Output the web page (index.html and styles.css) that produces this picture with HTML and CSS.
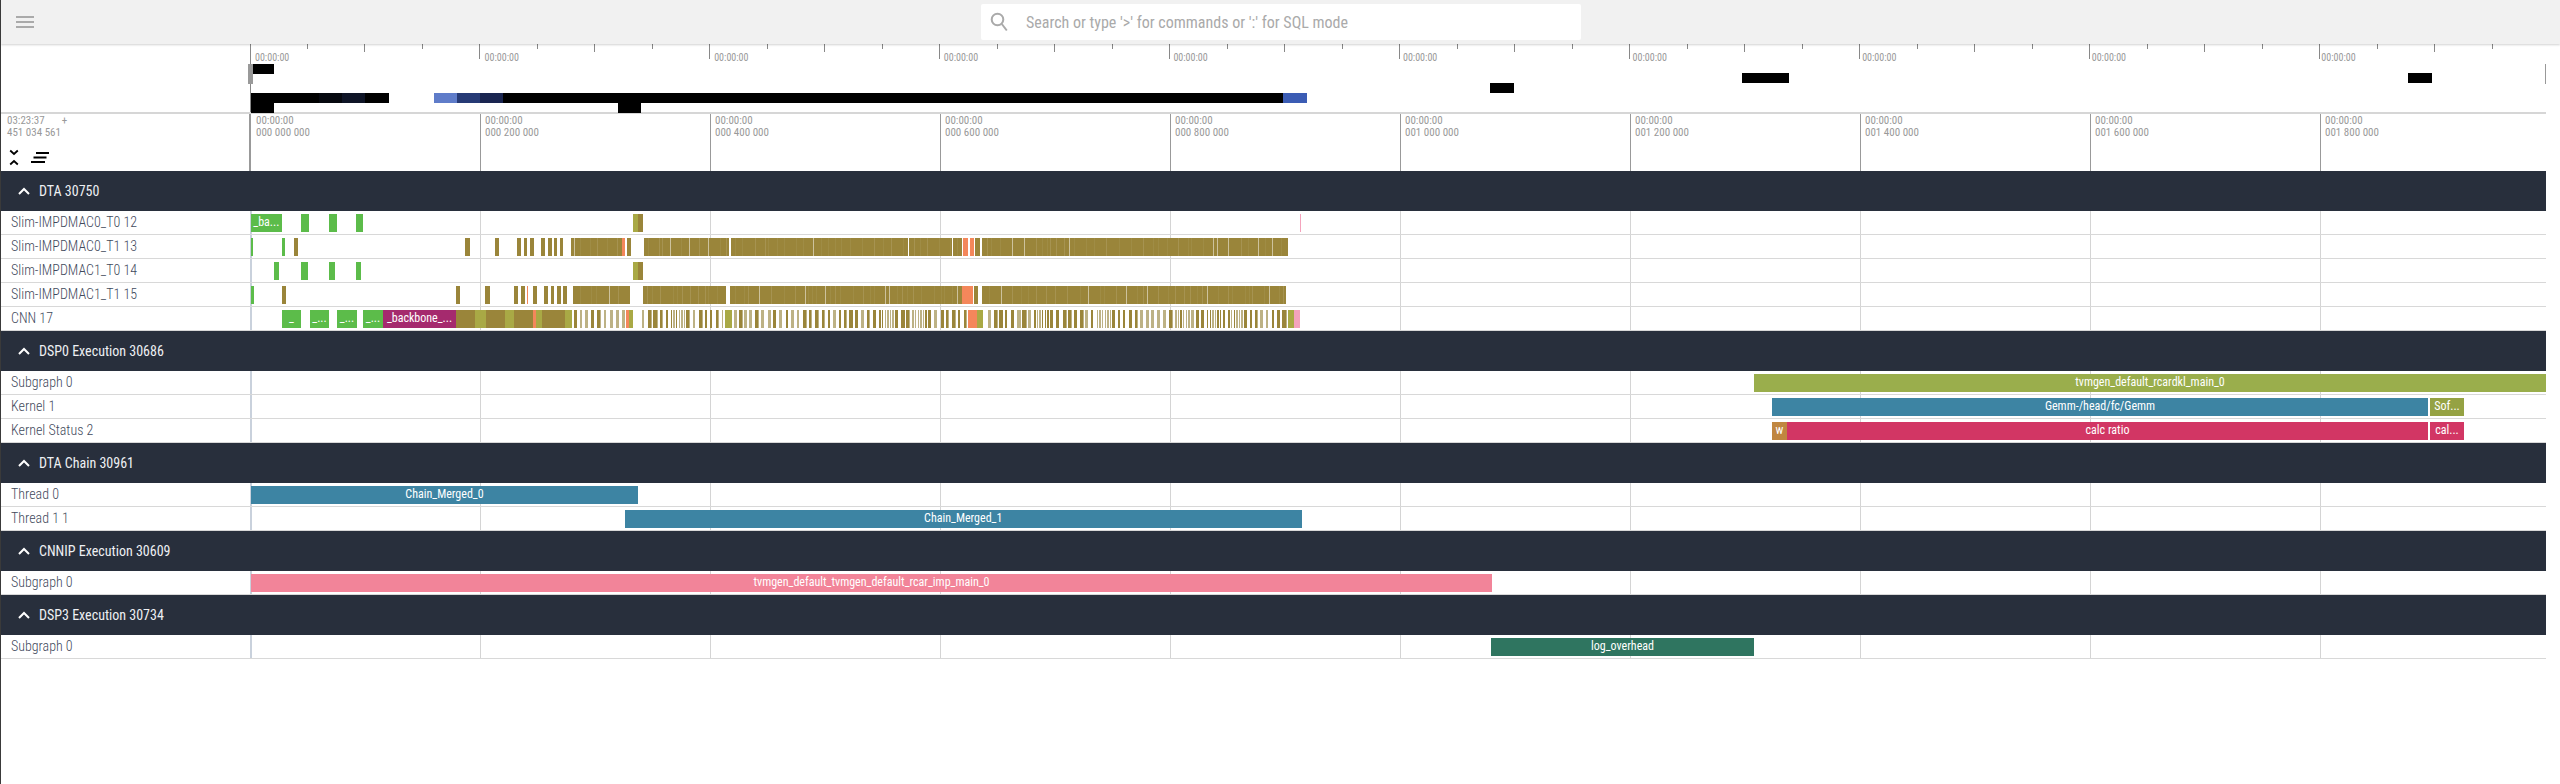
FILE: index.html
```html
<!DOCTYPE html>
<html lang="en">
<head>
<meta charset="utf-8">
<title>Trace viewer</title>
<link rel="stylesheet" href="styles.css">
</head>
<body>
<header class="topbar">
  <svg class="menu-icon" viewBox="0 0 18 12" aria-hidden="true"><path d="M0 1h18M0 6h18M0 11h18"/></svg>
  <div class="search">
    <svg class="search-icon" viewBox="0 0 18 20" aria-hidden="true"><circle cx="7.5" cy="7.5" r="5.8"/><path d="M11.8 12l5 6.5"/></svg>
    <span class="placeholder">Search or type '&gt;' for commands or ':' for SQL mode</span>
  </div>
</header>

<main class="page">
  <section class="overview">
    <div class="ov-left"></div>
    <div class="ov-canvas" id="overview">
      <div class="ov-scale">
        <span>00:00:00</span><span>00:00:00</span><span>00:00:00</span><span>00:00:00</span><span>00:00:00</span>
        <span>00:00:00</span><span>00:00:00</span><span>00:00:00</span><span>00:00:00</span><span>00:00:00</span>
      </div>
    </div>
  </section>

  <section class="axis">
    <div class="axis-left">
      <div class="axis-time">
        <div class="axis-clock"><span>03:23:37</span><span>+</span></div>
        <div>451 034 561</div>
      </div>
      <div class="axis-tools">
        <svg class="tool-fold" viewBox="0 0 10 17" aria-hidden="true"><path d="M1.2 1.5L5 5l3.8-3.500M1.2 15.500L5 12l3.800 3.500"/></svg>
        <svg class="tool-lines" viewBox="0 0 18 11" aria-hidden="true"><path d="M5 1h13M2.500 5.500h13M0 10h14"/></svg>
      </div>
    </div>
    <div class="axis-scale">
      <div class="axis-tick">00:00:00<br>000 000 000</div>
      <div class="axis-tick">00:00:00<br>000 200 000</div>
      <div class="axis-tick">00:00:00<br>000 400 000</div>
      <div class="axis-tick">00:00:00<br>000 600 000</div>
      <div class="axis-tick">00:00:00<br>000 800 000</div>
      <div class="axis-tick">00:00:00<br>001 000 000</div>
      <div class="axis-tick">00:00:00<br>001 200 000</div>
      <div class="axis-tick">00:00:00<br>001 400 000</div>
      <div class="axis-tick">00:00:00<br>001 600 000</div>
      <div class="axis-tick">00:00:00<br>001 800 000</div>
    </div>
  </section>

  <section class="group">
    <h2 class="group-head"><svg class="chevron" viewBox="0 0 12 8" aria-hidden="true"><path d="M1 7l5-5 5 5"/></svg><span>DTA 30750</span></h2>
    <div class="row"><div class="row-label">Slim-IMPDMAC0_T0 12</div><div class="track" data-track="s0"></div></div>
    <div class="row"><div class="row-label">Slim-IMPDMAC0_T1 13</div><div class="track" data-track="s1"></div></div>
    <div class="row"><div class="row-label">Slim-IMPDMAC1_T0 14</div><div class="track" data-track="s2"></div></div>
    <div class="row"><div class="row-label">Slim-IMPDMAC1_T1 15</div><div class="track" data-track="s3"></div></div>
    <div class="row"><div class="row-label">CNN 17</div><div class="track" data-track="cnn"></div></div>
  </section>

  <section class="group">
    <h2 class="group-head"><svg class="chevron" viewBox="0 0 12 8" aria-hidden="true"><path d="M1 7l5-5 5 5"/></svg><span>DSP0 Execution 30686</span></h2>
    <div class="row"><div class="row-label">Subgraph 0</div><div class="track" data-track="d0"></div></div>
    <div class="row"><div class="row-label">Kernel 1</div><div class="track" data-track="d1"></div></div>
    <div class="row"><div class="row-label">Kernel Status 2</div><div class="track" data-track="d2"></div></div>
  </section>

  <section class="group">
    <h2 class="group-head"><svg class="chevron" viewBox="0 0 12 8" aria-hidden="true"><path d="M1 7l5-5 5 5"/></svg><span>DTA Chain 30961</span></h2>
    <div class="row"><div class="row-label">Thread 0</div><div class="track" data-track="c0"></div></div>
    <div class="row"><div class="row-label">Thread 1 1</div><div class="track" data-track="c1"></div></div>
  </section>

  <section class="group">
    <h2 class="group-head"><svg class="chevron" viewBox="0 0 12 8" aria-hidden="true"><path d="M1 7l5-5 5 5"/></svg><span>CNNIP Execution 30609</span></h2>
    <div class="row"><div class="row-label">Subgraph 0</div><div class="track" data-track="n0"></div></div>
  </section>

  <section class="group">
    <h2 class="group-head"><svg class="chevron" viewBox="0 0 12 8" aria-hidden="true"><path d="M1 7l5-5 5 5"/></svg><span>DSP3 Execution 30734</span></h2>
    <div class="row"><div class="row-label">Subgraph 0</div><div class="track" data-track="p0"></div></div>
  </section>
</main>
<script src="app.js"></script>
</body>
</html>
```
FILE: styles.css
```css
* { box-sizing: border-box; }
html, body { margin: 0; height: 100%; background: #fff; }
body {
  font-family: Roboto, "Noto Sans", sans-serif;
  font-stretch: condensed;
  overflow: hidden;
  border-left: 1px solid #3a3a3a;
}

.topbar {
  height: 44px;
  background: #f1f1f1;
  box-shadow: 0 1px 2px rgba(0, 0, 0, .18);
  display: flex;
  align-items: center;
  position: relative;
  z-index: 2;
}
.menu-icon { width: 18px; height: 12px; margin: 0 0 0 15px; fill: none; stroke: #aaa; stroke-width: 2; }
.search {
  margin-left: 947px;
  width: 600px;
  height: 36px;
  background: #fff;
  border-radius: 2px;
  display: flex;
  align-items: center;
}
.search-icon { width: 18px; height: 20px; margin-left: 9px; fill: none; stroke: #aaa; stroke-width: 2; }
.placeholder { margin-left: 18px; color: #aaa; font-size: 16px; white-space: nowrap; }

.page { width: 2545px; overflow: hidden; }

.overview { height: 70px; display: flex; border-bottom: 2px solid #d6d6d6; }
.ov-left { width: 249px; flex: none; }
.ov-canvas { flex: 1; min-width: 0; position: relative; border-left: 1px solid #888; }
.ov-scale {
  height: 24px;
  margin-left: -1px;
  display: grid;
  grid-template-columns: repeat(10, 229.6px);
  background-repeat: no-repeat;
  background-image:
    repeating-linear-gradient(90deg, transparent 0 229px, #888 229px 230px),
    repeating-linear-gradient(90deg, transparent 0 114px, #888 114px 115px, transparent 115px 230px),
    repeating-linear-gradient(90deg, transparent 0 57px, #888 57px 58px, transparent 58px 172px, #888 172px 173px, transparent 173px 230px);
  background-size: 100% 15px, 100% 8px, 100% 5px;
}
.ov-scale span { font-size: 10px; color: #999; padding: 8px 0 0 5px; line-height: 12px; }
.ov-bar { position: absolute; height: 10px; background: #000; }
.ov-handle { position: absolute; top: 20px; height: 20px; background: #999; }

.axis { height: 57px; display: flex; }
.axis-left { width: 249px; flex: none; display: flex; flex-direction: column; justify-content: space-between; padding: 0 0 5px 6px; }
.axis-time { font-size: 11px; line-height: 12px; color: #999; padding-top: 1px; }
.axis-clock { display: flex; gap: 17px; }
.axis-tools { display: flex; align-items: center; gap: 12px; padding-left: 2px; }
.tool-fold { width: 10px; height: 17px; fill: none; stroke: #000; stroke-width: 1.8; }
.tool-lines { width: 18px; height: 11px; fill: none; stroke: #000; stroke-width: 1.8; }
.axis-scale {
  flex: 1;
  min-width: 0;
  display: grid;
  grid-template-columns: 229px repeat(9, 230px);
  border-left: 2px solid #999;
  margin-left: -1px;
}
.axis-tick { border-left: 1px solid #999; font-size: 11px; line-height: 12px; color: #999; padding: 1px 0 0 4px; }
.axis-tick:first-child { border-left: 0; padding-left: 5px; }

.group-head {
  margin: 0;
  height: 40px;
  background: #282f3c;
  color: #eef0f3;
  font-size: 14px;
  font-weight: 400;
  display: flex;
  align-items: center;
  padding-left: 17px;
  gap: 9px;
}
.chevron { width: 12px; height: 8px; fill: none; stroke: #fff; stroke-width: 2; }

.row { height: 24px; display: flex; border-bottom: 1px solid #d8d8d8; }
.row-label { width: 249px; flex: none; padding-left: 10px; font-size: 14px; font-weight: 300; line-height: 22px; color: #3f4a5c; white-space: nowrap; }
.track {
  flex: 1;
  position: relative;
  border-left: 2px solid #c9d1dc;
  background-image: repeating-linear-gradient(90deg, transparent 0 228px, #d4d4d4 228px 229px, transparent 229px 230px);
}

.slice {
  position: absolute;
  top: 3px;
  height: 18px;
  color: #fff;
  font-size: 12px;
  line-height: 17px;
  text-align: center;
  white-space: nowrap;
  overflow: hidden;
}
.seam { position: absolute; top: 0; bottom: 0; width: 1px; }
.c-green { background: #5cbc4a; }
.c-olive { background: #9a853a; }
.c-lime { background: #a9a945; }
.c-orange { background: #f4875b; }
.c-magenta { background: #a52a6e; }
.c-pink { background: #f4a3bc; }
.c-moss { background: #9aae4c; }
.c-teal { background: #3d84a3; }
.c-sof { background: #95a243; }
.c-crimson { background: #d23664; }
.c-brown { background: #c08640; }
.c-rose { background: #f28499; }
.c-forest { background: #2f7560; }
.c-pale { background: #bdb285; }
```
FILE: app.js
```js
// Slice data for the trace tracks, in page pixels. Dense regions are expanded from seeded noise.
var ORIGIN = 251;
var seed = 7;
function rnd() { seed = (seed * 16807) % 2147483647; return seed / 2147483647; }

function add(parent, x0, x1, color, label) {
  var el = document.createElement('div');
  el.className = 'slice c-' + color;
  el.style.left = (x0 - ORIGIN - 1) + 'px';
  el.style.width = (x1 - x0) + 'px';
  if (label) el.textContent = label;
  parent.appendChild(el);
  return el;
}

function seam(slice, at, alpha) {
  var s = document.createElement('i');
  s.className = 'seam';
  s.style.left = at + 'px';
  s.style.background = 'rgba(255,255,255,' + alpha + ')';
  slice.appendChild(s);
}

function block(parent, x0, x1) {
  var el = add(parent, x0, x1, 'olive');
  var w = x1 - x0, at = 3 + rnd() * 6;
  while (at < w - 1) {
    var r = rnd();
    seam(el, at, r > 0.88 ? 0.5 : r > 0.55 ? 0.12 : 0.06);
    at += 3 + rnd() * 10;
  }
}

function stripes(parent, x0, x1) {
  var x = x0;
  while (x < x1) {
    var tight = rnd() < 0.06;
    var n = tight ? 6 : 1;
    for (var i = 0; i < n && x < x1; i++) {
      var r = rnd();
      if (tight) {
        add(parent, x, x + 1.4, r > 0.5 ? 'pale' : 'olive');
        x += 2.6;
      } else {
        var w = 2 + rnd() * 1.4;
        add(parent, x, x + w, r > 0.7 ? 'pale' : 'olive');
        if (r <= 0.7 && rnd() > 0.4) { add(parent, x + w, x + w + 1, 'pale'); }
        x += 5 + rnd() * 1.6;
      }
    }
  }
}

var simple = {
  s0: [[251, 281.7, 'green', '_ba...'], [301.3, 309.3, 'green'], [329, 336.7, 'green'], [356.3, 363, 'green'],
       [633, 637.5, 'lime'], [637.5, 642.5, 'olive'], [1300, 1301, 'pink']],
  s1: [[251, 253.3, 'green'], [281.7, 285.3, 'green'], [294, 297.7, 'olive'], [465.3, 470.3, 'olive'], [495, 499, 'olive'],
       [517.3, 520.7, 'olive'], [523.7, 527, 'olive'], [530, 534.3, 'olive'], [541.3, 544.7, 'olive'], [547.7, 551.7, 'olive'],
       [553.7, 556.7, 'olive'], [560, 563.3, 'olive'], [621.7, 625.3, 'orange'], [626.7, 631, 'olive'],
       [963.3, 968.5, 'orange'], [969.5, 974, 'orange'], [975.3, 980, 'olive']],
  s2: [[274, 279.3, 'green'], [301.3, 307.7, 'green'], [329.3, 334.7, 'green'], [356.3, 360.7, 'green'],
       [633, 637.5, 'lime'], [637.5, 642.5, 'olive']],
  s3: [[251, 254, 'green'], [281.7, 286.3, 'olive'], [456, 460.3, 'olive'], [484.8, 489.7, 'olive'],
       [514.3, 518.3, 'olive'], [520.7, 525, 'olive'], [526.7, 528, 'orange'], [532.7, 536.7, 'olive'], [544.3, 548, 'olive'],
       [550.7, 554, 'olive'], [556.7, 560.7, 'olive'], [563, 566.7, 'olive'], [962, 973.3, 'orange'], [974, 978, 'olive']],
  cnn: [[281.7, 301.3, 'green', '_'], [309.7, 329.3, 'green', '_...'], [337, 357, 'green', '_...'], [363, 383, 'green', '_...'],
        [383, 456, 'magenta', '_backbone_...'], [456, 475, 'olive'], [475, 486, 'lime'], [486, 505, 'olive'], [505, 514.3, 'lime'],
        [514.3, 532.7, 'olive'], [532.7, 535.7, 'orange'], [535.7, 541.7, 'lime'], [541.7, 565.3, 'olive'], [565.3, 572, 'lime'],
        [626, 629.3, 'orange'], [629.3, 633, 'lime'], [725, 731.7, 'lime'], [967.7, 977, 'orange'], [977, 982.7, 'lime'],
        [1288.3, 1293.7, 'lime'], [1293.7, 1300, 'pink']],
  d0: [[1754, 2546, 'moss', 'tvmgen_default_rcardkl_main_0']],
  d1: [[1772, 2428, 'teal', 'Gemm-/head/fc/Gemm'], [2430, 2464, 'sof', 'Sof...']],
  d2: [[1772, 1787, 'brown', 'w'], [1787, 2428, 'crimson', 'calc ratio'], [2430, 2464, 'crimson', 'cal...']],
  c0: [[251, 638, 'teal', 'Chain_Merged_0']],
  c1: [[625, 1301.5, 'teal', 'Chain_Merged_1']],
  n0: [[251, 1492, 'rose', 'tvmgen_default_tvmgen_default_rcar_imp_main_0']],
  p0: [[1491.3, 1753.7, 'forest', 'log_overhead']]
};
var blocks = {
  s1: [[571.3, 621.7], [644, 729], [731, 908], [909, 952], [953, 962.3], [982.3, 1288.3]],
  s3: [[573, 630.3], [643, 725.7], [730, 962], [981.7, 1285.7]]
};
var striped = { cnn: [[574, 626], [642, 725], [734, 966], [988, 1288]] };

function fill(track) {
  var name = track.getAttribute('data-track');
  (blocks[name] || []).forEach(function (b) { block(track, b[0], b[1]); });
  (striped[name] || []).forEach(function (b) { stripes(track, b[0], b[1]); });
  (simple[name] || []).forEach(function (s) { add(track, s[0], s[1], s[2], s[3]); });
}
Array.prototype.forEach.call(document.querySelectorAll('.track'), fill);

// Overview: x0, x1, y, colour
var overview = document.getElementById('overview');
[[253, 274, 64], [1490, 1514, 83], [1742, 1789, 73], [2408, 2432, 73],
 [251, 319, 93], [319, 342, 93, '#06080f'], [342, 365, 93, '#0e1426'], [365, 389, 93],
 [434, 457, 93, '#5f7cc9'], [457, 480, 93, '#263a75'], [480, 503, 93, '#1a2550'], [503, 1283, 93], [1283, 1307, 93, '#3b5cb4'],
 [251, 274, 103], [618, 641, 103]].forEach(function (b) {
  var el = document.createElement('div');
  el.className = 'ov-bar';
  el.style.left = (b[0] - 251) + 'px';
  el.style.width = (b[1] - b[0]) + 'px';
  el.style.top = (b[2] - 44) + 'px';
  if (b[3]) el.style.background = b[3];
  overview.appendChild(el);
});
// Range handles at both ends of the overview: x, width.
[[248, 5], [2545, 1]].forEach(function (h) {
  var el = document.createElement('div');
  el.className = 'ov-handle';
  el.style.left = (h[0] - 251) + 'px';
  el.style.width = h[1] + 'px';
  overview.appendChild(el);
});
```
